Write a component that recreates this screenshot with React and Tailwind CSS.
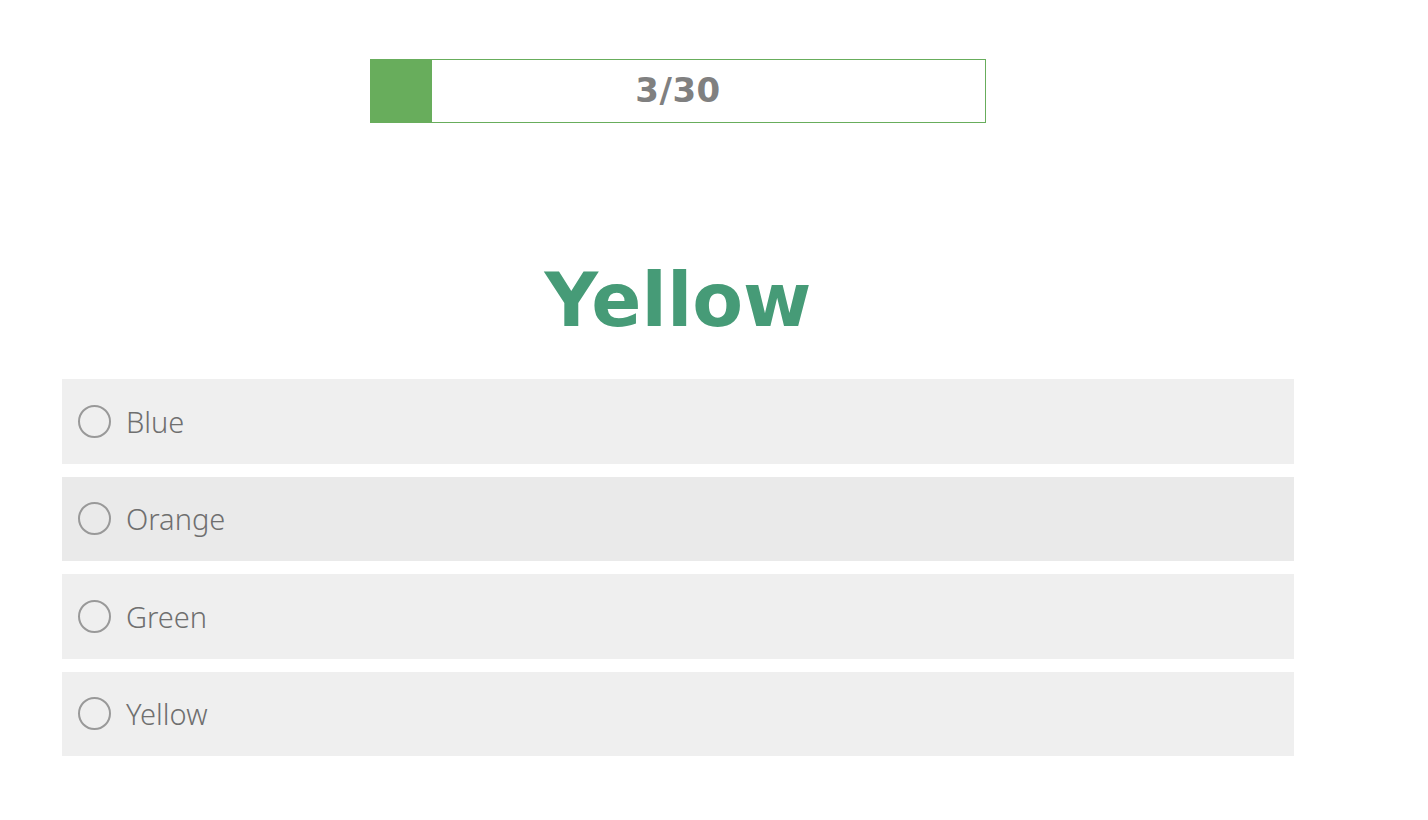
import React, { useState } from 'react';

const OPTIONS = ['Blue', 'Orange', 'Green', 'Yellow'];

const Option = ({ label, hovered, onEnter }) => (
  <label
    onMouseEnter={onEnter}
    className={`flex items-center h-[84.5px] pl-4 cursor-pointer ${hovered ? 'bg-[#eaeaea]' : 'bg-[#efefef]'}`}
  >
    <span className="w-[33px] h-[33px] rounded-full border-[2.5px] border-[#999999] shrink-0" />
    <span className="ml-[15px] text-[29px] font-light text-[#6f6f6f]" style={{ fontFamily: '"Noto Sans", sans-serif' }}>
      {label}
    </span>
  </label>
);

export default function App() {
  const [hovered, setHovered] = useState(1);
  const current = 3;
  const total = 30;

  return (
    <div className="min-h-screen bg-white pt-[59px]" style={{ fontFamily: '"DejaVu Sans", sans-serif' }}>
      <div className="ml-[62px] w-[1232px]">
        {/* progress */}
        <div className="relative mx-auto w-[616px] h-[64px] border border-[#68ad5c] flex items-center justify-center">
          <div className="absolute left-0 top-0 bottom-0 bg-[#68ad5c]" style={{ width: `${(current / total) * 100}%` }} />
          <span className="relative mb-[2px] text-[34px] font-bold tracking-[0.5px] text-[#808080]">
            {current}/{total}
          </span>
        </div>

        <h1 className="mt-[140px] text-center text-[74px] leading-none font-bold text-[#469b77]">Yellow</h1>

        <div className="mt-[42px] flex flex-col gap-[13px]">
          {OPTIONS.map((o, i) => (
            <Option key={o} label={o} hovered={hovered === i} onEnter={() => setHovered(i)} />
          ))}
        </div>
      </div>
    </div>
  );
}
